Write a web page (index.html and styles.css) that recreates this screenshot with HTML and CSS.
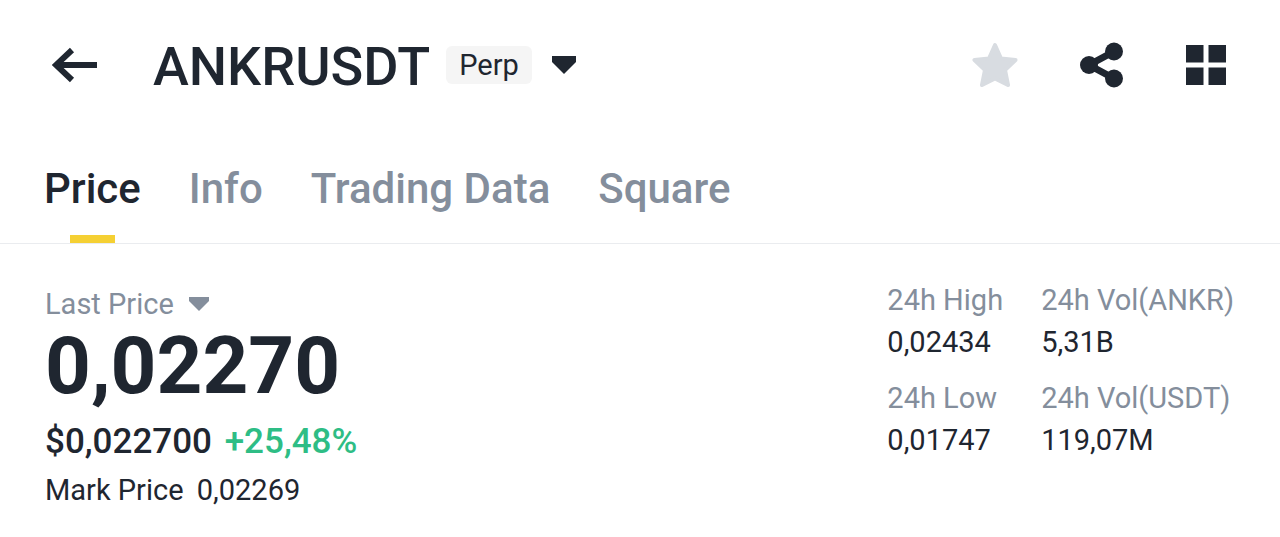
FILE: index.html
```html
<!doctype html>
<html lang="en">
    <head>
        <meta charset="utf-8">
        <meta name="viewport" content="width=device-width, initial-scale=1">
        <title>ANKRUSDT Perp</title>
        <link rel="stylesheet" href="styles.css">
    </head>
    <body>
        <header class="topbar">
            <button class="icon-btn back" aria-label="Back">
                <svg width="46" height="36" viewBox="0 0 46 36">
                    <path d="M20 3 4 18l16 15M5 18h40" fill="none" stroke="currentColor" stroke-width="6"/>
                </svg>
            </button>
            <h1>ANKRUSDT</h1>
            <span class="tag">Perp</span>
            <button class="icon-btn" aria-label="Change pair">
                <svg width="24" height="18" viewBox="0 0 24 18">
                    <path d="M0 0h24v6L12 18 0 6z" fill="currentColor"/>
                </svg>
            </button>
            <div class="actions">
                <button class="icon-btn star" aria-label="Favorite">
                    <svg width="46" height="46" viewBox="0 0 46 46">
                        <path d="M23 3l6 13.500 14.500 1.500L33 28l3 15-13-6.500L10 43l3-15L2.500 18 17 16.500z" fill="currentColor" stroke="currentColor" stroke-width="4" stroke-linejoin="round"/>
                    </svg>
                </button>
                <button class="icon-btn" aria-label="Share">
                    <svg width="44" height="46" viewBox="0 0 44 46">
                        <path d="M34 9.500 9 23l25 13.500" fill="none" stroke="currentColor" stroke-width="7"/>
                        <g fill="currentColor">
                            <circle cx="34" cy="9.500" r="9"/>
                            <circle cx="9" cy="23" r="9"/>
                            <circle cx="34" cy="36.500" r="9"/>
                        </g>
                    </svg>
                </button>
                <button class="icon-btn" aria-label="More">
                    <svg width="40" height="40" viewBox="0 0 40 40">
                        <path d="M0 0h17.500v17.500H0zM22.500 0H40v17.500H22.500zM0 22.500h17.500V40H0zM22.500 22.500H40V40H22.500z" fill="currentColor"/>
                    </svg>
                </button>
            </div>
        </header>

        <nav class="tabs">
            <a href="#price" class="active">Price</a>
            <a href="#info">Info</a>
            <a href="#data">Trading Data</a>
            <a href="#square">Square</a>
        </nav>

        <main class="ticker">
            <section class="price">
                <button class="price-type">
                    Last Price
                    <svg width="20" height="14" viewBox="0 0 20 14">
                        <path d="M0 0h20v4L10 14 0 4z" fill="currentColor"/>
                    </svg>
                </button>
                <div class="last">0,02270</div>
                <div class="fiat">$0,022700 <span class="up">+25,48%</span></div>
                <div class="mark">Mark Price <span>0,02269</span></div>
            </section>
            <dl class="stats">
                <div>
                    <dt>24h High</dt>
                    <dd>0,02434</dd>
                </div>
                <div>
                    <dt>24h Vol(ANKR)</dt>
                    <dd>5,31B</dd>
                </div>
                <div>
                    <dt>24h Low</dt>
                    <dd>0,01747</dd>
                </div>
                <div>
                    <dt>24h Vol(USDT)</dt>
                    <dd>119,07M</dd>
                </div>
            </dl>
        </main>
    </body>
</html>
```
FILE: styles.css
```css
* {
    box-sizing: border-box;
}
body {
    margin: 0;
    background: #fff;
    color: #1f2630;
    font-family: Roboto, "Liberation Sans", sans-serif;
    font-size: 29px;
}
button {
    padding: 0;
    border: none;
    background: none;
    color: inherit;
    font: inherit;
}
svg {
    display: block;
}

/* header */
.topbar {
    display: flex;
    align-items: center;
    height: 130px;
    padding: 0 54px 0 52px;
}
h1 {
    margin: 0 16px 0 55px;
    padding-top: 4px;
    font-size: 54px;
    font-weight: 500;
    line-height: 64px;
}
.tag {
    margin-right: 20px;
    padding: 0 13px;
    border-radius: 6px;
    background: #f5f5f5;
    line-height: 38px;
}
.actions {
    display: flex;
    align-items: center;
    gap: 62px;
    margin-left: auto;
}
.star {
    color: #d8dce1;
}

/* tabs */
.tabs {
    display: flex;
    gap: 48px;
    padding: 0 44px;
    border-bottom: 1px solid #eaecef;
}
.tabs a {
    position: relative;
    height: 113px;
    color: #848e9c;
    font-size: 42px;
    font-weight: 500;
    line-height: 118px;
    text-decoration: none;
}
.tabs .active {
    color: #1f2630;
}
.tabs .active::after {
    content: "";
    position: absolute;
    bottom: 0;
    left: 50%;
    width: 45px;
    height: 8px;
    margin-left: -22px;
    background: #f5d033;
}

/* prices */
.ticker {
    display: flex;
    justify-content: space-between;
    padding: 36px 46px 24px 45px;
}
.price {
    padding-top: 4px;
}
.price-type {
    display: flex;
    align-items: center;
    gap: 15px;
    color: #848e9c;
    line-height: 40px;
}
.last {
    font-size: 80px;
    font-weight: 700;
    line-height: 84px;
}
.fiat {
    margin-top: 12px;
    font-size: 35px;
    font-weight: 500;
    line-height: 44px;
}
.fiat .up {
    margin-left: 4px;
    color: #2ebd85;
}
.mark {
    margin-top: 6px;
    line-height: 40px;
}
.mark span {
    margin-left: 6px;
}
.stats {
    display: grid;
    grid-template-columns: auto auto;
    align-content: start;
    gap: 14px 38px;
    margin: 0;
}
.stats dt {
    color: #848e9c;
    line-height: 40px;
}
.stats dd {
    margin: 0;
    line-height: 44px;
}
```
